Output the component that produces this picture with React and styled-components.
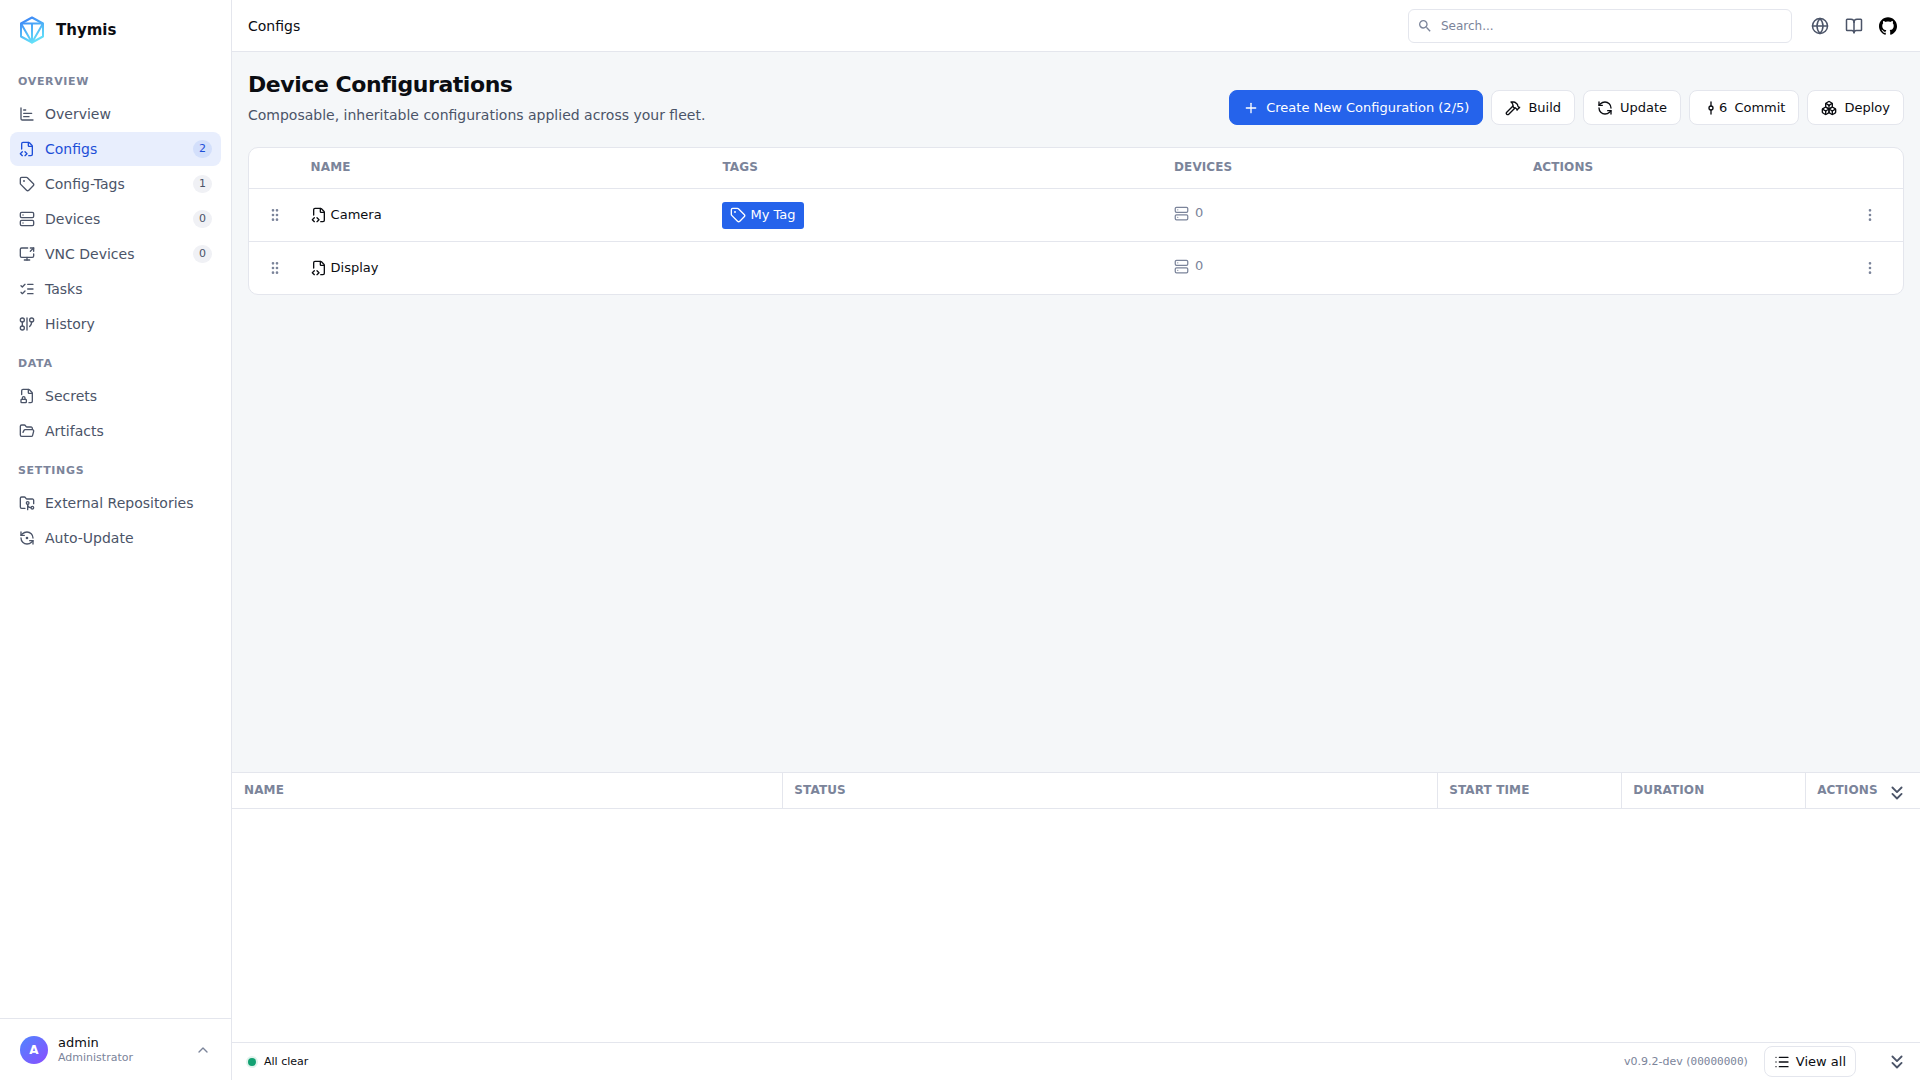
import React from 'react';
import styled, { createGlobalStyle } from 'styled-components';
import {
    BookOpen, Boxes, ChartBar, ChevronsDown, ChevronUp, EllipsisVertical, FileCode2, FileLock2,
    FolderGit2, FolderOpen, GitCommitVertical, GitGraph, Globe, GripVertical, Hammer, List,
    ListChecks, Plus, RefreshCcw, RefreshCcwDot, ScreenShare, Server, Tag,
} from 'lucide-react';
import { MdSearch } from 'react-icons/md';
import { SiGithub } from 'react-icons/si';

const sections = [
    {
        title: 'Overview',
        items: [
            { label: 'Overview', icon: ChartBar },
            { label: 'Configs', icon: FileCode2, count: 2, active: true },
            { label: 'Config-Tags', icon: Tag, count: 1 },
            { label: 'Devices', icon: Server, count: 0 },
            { label: 'VNC Devices', icon: ScreenShare, count: 0 },
            { label: 'Tasks', icon: ListChecks },
            { label: 'History', icon: GitGraph },
        ],
    },
    {
        title: 'Data',
        items: [
            { label: 'Secrets', icon: FileLock2 },
            { label: 'Artifacts', icon: FolderOpen },
        ],
    },
    {
        title: 'Settings',
        items: [
            { label: 'External Repositories', icon: FolderGit2 },
            { label: 'Auto-Update', icon: RefreshCcwDot },
        ],
    },
];

const configs = [
    { name: 'Camera', tags: ['My Tag'], devices: 0 },
    { name: 'Display', tags: [], devices: 0 },
];

const Logo = () => (
    <svg width="26" height="28" viewBox="0 0 26 28" fill="none" aria-hidden="true">
        <defs>
            <linearGradient id="logo" x1="6" y1="1" x2="18" y2="27" gradientUnits="userSpaceOnUse">
                <stop stopColor="#3b82f6" />
                <stop offset="1" stopColor="#67e8f9" />
            </linearGradient>
        </defs>
        <g stroke="url(#logo)" strokeWidth="2" strokeLinejoin="round">
            <path d="M13 1.5 24 7.5v13L13 26.5 2 20.5v-13z" />
            <path d="M2 7.5h22M13 7.5v19M2 7.5l11 19 11-19" />
        </g>
    </svg>
);

const Sidebar = () => (
    <Aside>
        <Brand><Logo />Thymis</Brand>
        <Nav>
            {sections.map((section) => (
                <Section key={section.title}>
                    <SectionTitle>{section.title}</SectionTitle>
                    {section.items.map(({ label, icon: Icon, count, active }) => (
                        <NavLink href="#" key={label} $active={active}>
                            <Icon size={16} />
                            <span>{label}</span>
                            {count !== undefined && <Count $active={active}>{count}</Count>}
                        </NavLink>
                    ))}
                </Section>
            ))}
        </Nav>
        <UserButton type="button">
            <Avatar>A</Avatar>
            <UserText>
                <UserName>admin</UserName>
                <UserRole>Administrator</UserRole>
            </UserText>
            <ChevronUp size={16} />
        </UserButton>
    </Aside>
);

const ConfigTable = () => (
    <Card>
        <Table>
            <colgroup>
                <Col $width="3%" />
                <Col $width="24.9%" />
                <Col $width="27.3%" />
                <Col $width="21.7%" />
                <Col $width="23.1%" />
            </colgroup>
            <thead>
                <tr>
                    <Th aria-label="Reorder" />
                    <Th>Name</Th>
                    <Th>Tags</Th>
                    <Th>Devices</Th>
                    <Th>Actions</Th>
                </tr>
            </thead>
            <tbody>
                {configs.map((config) => (
                    <tr key={config.name}>
                        <HandleCell>
                            <IconButton type="button" aria-label="Move"><GripVertical size={16} /></IconButton>
                        </HandleCell>
                        <Td><ConfigLink href="#"><FileCode2 size={16} />{config.name}</ConfigLink></Td>
                        <Td>
                            <TagList>
                                {config.tags.map((tag) => (
                                    <TagLink href="#" key={tag}><Tag size={16} />{tag}</TagLink>
                                ))}
                            </TagList>
                        </Td>
                        <DevicesCell><Devices><Server size={15} />{config.devices}</Devices></DevicesCell>
                        <MenuCell>
                            <IconButton type="button" aria-label="More"><EllipsisVertical size={16} /></IconButton>
                        </MenuCell>
                    </tr>
                ))}
            </tbody>
        </Table>
    </Card>
);

const TaskPanel = () => (
    <Panel>
        <Table>
            <colgroup>
                <Col $width="32.6%" />
                <Col $width="38.8%" />
                <Col $width="10.9%" />
                <Col $width="10.9%" />
                <Col $width="6.8%" />
            </colgroup>
            <thead>
                <tr>
                    <TaskTh>Name</TaskTh>
                    <TaskTh>Status</TaskTh>
                    <TaskTh>Start Time</TaskTh>
                    <TaskTh>Duration</TaskTh>
                    <TaskTh>Actions</TaskTh>
                </tr>
            </thead>
        </Table>
        <CollapseButton type="button" aria-label="Collapse"><ChevronsDown size={22} /></CollapseButton>
    </Panel>
);

const App = () => {
    return (
        <>
            <GlobalStyle />
            <Shell>
                <Sidebar />
                <Content>
                    <Topbar>
                        <Crumb>Configs</Crumb>
                        <SearchBox>
                            <MdSearch size={16} />
                            <SearchInput type="search" aria-label="Search" placeholder="Search..." />
                        </SearchBox>
                        <TopLinks>
                            <TopLink href="#" aria-label="Language"><Globe size={18} /></TopLink>
                            <TopLink href="#" aria-label="Documentation"><BookOpen size={18} /></TopLink>
                            <TopLink href="#" aria-label="GitHub" $dark><SiGithub size={18} /></TopLink>
                        </TopLinks>
                    </Topbar>
                    <Main>
                        <PageHead>
                            <div>
                                <Title>Device Configurations</Title>
                                <Subtitle>Composable, inheritable configurations applied across your fleet.</Subtitle>
                            </div>
                            <Actions>
                                <Button type="button" $primary><Plus size={16} />Create New Configuration (2/5)</Button>
                                <Button type="button"><Hammer size={16} />Build</Button>
                                <Button type="button"><RefreshCcw size={16} />Update</Button>
                                <Button type="button">
                                    <Changes><GitCommitVertical size={16} />6</Changes>
                                    Commit
                                </Button>
                                <Button type="button"><Boxes size={16} />Deploy</Button>
                            </Actions>
                        </PageHead>
                        <ConfigTable />
                    </Main>
                    <TaskPanel />
                    <StatusBar>
                        <Dot />
                        <span>All clear</span>
                        <Version>v0.9.2-dev (<code>00000000</code>)</Version>
                        <ViewAll type="button"><List size={16} />View all</ViewAll>
                        <BarToggle type="button" aria-label="Hide tasks"><ChevronsDown size={22} /></BarToggle>
                    </StatusBar>
                </Content>
            </Shell>
        </>
    );
}

const GlobalStyle = createGlobalStyle`
    *, *::before, *::after {
        box-sizing: border-box;
    }

    body {
        margin: 0;
        font-family: "DejaVu Sans", sans-serif;
        font-size: 13px;
        line-height: 20px;
        color: #0b0d12;
        background: #f5f7f9;
    }

    button, input {
        font: inherit;
        color: inherit;
    }

    button {
        cursor: pointer;
    }

    a {
        color: inherit;
        text-decoration: none;
    }

    svg {
        flex-shrink: 0;
    }
`;

const Shell = styled.div`
    display: flex;
    height: 100vh;
`;

const Aside = styled.aside`
    display: flex;
    flex-direction: column;
    flex: 0 0 232px;
    background: #ffffff;
    border-right: 1px solid #e4e6ed;
`;

const Brand = styled.div`
    display: flex;
    align-items: center;
    gap: 11px;
    padding: 16px 19px 15px;
    font-size: 15px;
    font-weight: 700;
    line-height: 28px;
`;

const Nav = styled.nav`
    flex: 1;
    padding: 0 10px;
`;

const Section = styled.div`
    display: flex;
    flex-direction: column;
    gap: 1px;
`;

const SectionTitle = styled.h2`
    margin: 0;
    padding: 14px 8px 5px;
    font-size: 11px;
    font-weight: 700;
    line-height: 18px;
    letter-spacing: 0.06em;
    text-transform: uppercase;
    color: #7b849a;
`;

const NavLink = styled.a`
    display: flex;
    align-items: center;
    gap: 10px;
    height: 34px;
    padding: 0 9px;
    border-radius: 8px;
    font-size: 14px;
    color: ${(p) => (p.$active ? '#1d4ed8' : '#4b5468')};
    background: ${(p) => (p.$active ? '#e8eefd' : 'transparent')};
`;

const Count = styled.span`
    margin-left: auto;
    padding: 0 6px;
    border-radius: 9px;
    font-size: 11px;
    line-height: 18px;
    background: ${(p) => (p.$active ? '#d3dffb' : '#f0f1f5')};
`;

const UserButton = styled.button`
    display: flex;
    align-items: center;
    gap: 10px;
    height: 62px;
    padding: 0 20px;
    border: 0;
    border-top: 1px solid #e4e6ed;
    background: none;
    text-align: left;
    color: #7b849a;
`;

const Avatar = styled.span`
    display: grid;
    place-items: center;
    width: 28px;
    height: 28px;
    border-radius: 50%;
    font-size: 12px;
    font-weight: 700;
    color: #ffffff;
    background: linear-gradient(135deg, #4f86ff, #8b4dff);
`;

const UserText = styled.span`
    display: flex;
    flex-direction: column;
    flex: 1;
`;

const UserName = styled.span`
    line-height: 15px;
    color: #0b0d12;
`;

const UserRole = styled.span`
    font-size: 11px;
    line-height: 15px;
`;

const Content = styled.div`
    display: flex;
    flex-direction: column;
    flex: 1;
    min-width: 0;
`;

const Topbar = styled.header`
    display: flex;
    align-items: center;
    height: 52px;
    padding: 0 15px 0 16px;
    background: #ffffff;
    border-bottom: 1px solid #e4e6ed;
`;

const Crumb = styled.span`
    flex: 1;
    font-size: 14px;
`;

const SearchBox = styled.label`
    display: flex;
    align-items: center;
    gap: 8px;
    flex: 0 1 384px;
    height: 34px;
    padding: 0 8px;
    border: 1px solid #e4e6ed;
    border-radius: 6px;
    color: #7b849a;
`;

const SearchInput = styled.input`
    flex: 1;
    min-width: 0;
    padding: 0;
    border: 0;
    outline: none;
    background: none;
    font-size: 12px;

    &::placeholder {
        color: #7b849a;
    }
`;

const TopLinks = styled.div`
    display: flex;
    margin-left: 11px;
`;

const TopLink = styled.a`
    display: grid;
    place-items: center;
    width: 34px;
    height: 34px;
    color: ${(p) => (p.$dark ? '#000000' : '#4b5468')};
`;

const Main = styled.main`
    flex: 1;
    min-height: 0;
    padding: 16px;
    overflow: auto;
`;

const PageHead = styled.div`
    display: flex;
    align-items: flex-end;
    justify-content: space-between;
    margin-bottom: 22px;
`;

const Title = styled.h1`
    margin: 0 0 4px;
    font-size: 22px;
    font-weight: 700;
    line-height: 33px;
    letter-spacing: -0.02em;
`;

const Subtitle = styled.p`
    margin: 0;
    font-size: 14px;
    color: #4b5468;
`;

const Actions = styled.div`
    display: flex;
    gap: 8px;
`;

const Button = styled.button`
    display: flex;
    align-items: center;
    gap: 7px;
    height: 35px;
    padding: 0 13px;
    border: 1px solid ${(p) => (p.$primary ? '#2563eb' : '#e4e6ed')};
    border-radius: 8px;
    color: ${(p) => (p.$primary ? '#ffffff' : '#0b0d12')};
    background: ${(p) => (p.$primary ? '#2563eb' : '#ffffff')};
    white-space: nowrap;
`;

const Changes = styled.span`
    display: flex;
    align-items: center;
`;

const Card = styled.section`
    border: 1px solid #e4e6ed;
    border-radius: 10px;
    background: #ffffff;
    overflow: hidden;
`;

const Table = styled.table`
    width: 100%;
    table-layout: fixed;
    border-collapse: separate;
    border-spacing: 0;
`;

const Col = styled.col`
    width: ${(p) => p.$width};
`;

const Th = styled.th`
    height: 41px;
    padding: 10px 12px 12px;
    border-bottom: 1px solid #e4e6ed;
    font-size: 12px;
    font-weight: 700;
    line-height: 18px;
    letter-spacing: 0.01em;
    text-align: left;
    text-transform: uppercase;
    color: #7b849a;
`;

const TaskTh = styled(Th)`
    height: 36px;
    padding: 8px 12px 9px;

    & + & {
        padding-left: 11px;
        border-left: 1px solid #e4e6ed;
    }
`;

const Td = styled.td`
    height: 53px;
    padding: 0 12px;
    border-bottom: 1px solid #e4e6ed;

    tr:last-child > & {
        height: 52px;
        border-bottom: 0;
    }
`;

const HandleCell = styled(Td)`
    padding: 0 0 0 18px;
`;

const DevicesCell = styled(Td)`
    padding-bottom: 4px;
`;

const MenuCell = styled(Td)`
    padding-right: 25px;
`;

const IconButton = styled.button`
    display: grid;
    padding: 0;
    border: 0;
    background: none;
    color: #7b849a;

    ${MenuCell} > & {
        margin-left: auto;
    }
`;

const ConfigLink = styled.a`
    display: flex;
    align-items: center;
    gap: 4px;
`;

const TagList = styled.div`
    display: flex;
    gap: 4px;
`;

const TagLink = styled.a`
    display: flex;
    align-items: center;
    gap: 4px;
    height: 27px;
    padding: 0 8px;
    border-radius: 3px;
    color: #ffffff;
    background: #2563eb;
`;

const Devices = styled.span`
    display: flex;
    align-items: center;
    gap: 6px;
    color: #7b849a;
`;

const Panel = styled.section`
    position: relative;
    height: 270px;
    background: #ffffff;
    border-top: 1px solid #e4e6ed;
`;

const CollapseButton = styled.button`
    position: absolute;
    top: 9px;
    right: 12px;
    display: grid;
    padding: 0;
    border: 0;
    background: none;
    color: #4b5468;
`;

const StatusBar = styled.footer`
    display: flex;
    align-items: center;
    height: 38px;
    padding: 0 12px 0 16px;
    font-size: 11px;
    background: #ffffff;
    border-top: 1px solid #e4e6ed;
`;

const Dot = styled.span`
    width: 8px;
    height: 8px;
    margin-right: 8px;
    border-radius: 50%;
    background: #12a172;
    box-shadow: 0 0 0 2px #dff3ec;
`;

const Version = styled.span`
    margin-left: auto;
    color: #7b849a;

    code {
        font-family: "DejaVu Sans Mono", monospace;
    }
`;

const ViewAll = styled(Button)`
    gap: 6px;
    height: 31px;
    padding: 0 9px;
    margin: 0 30px 0 16px;
    font-size: 13px;
`;

const BarToggle = styled.button`
    display: grid;
    padding: 0;
    border: 0;
    background: none;
    color: #4b5468;
`;

export default App;
